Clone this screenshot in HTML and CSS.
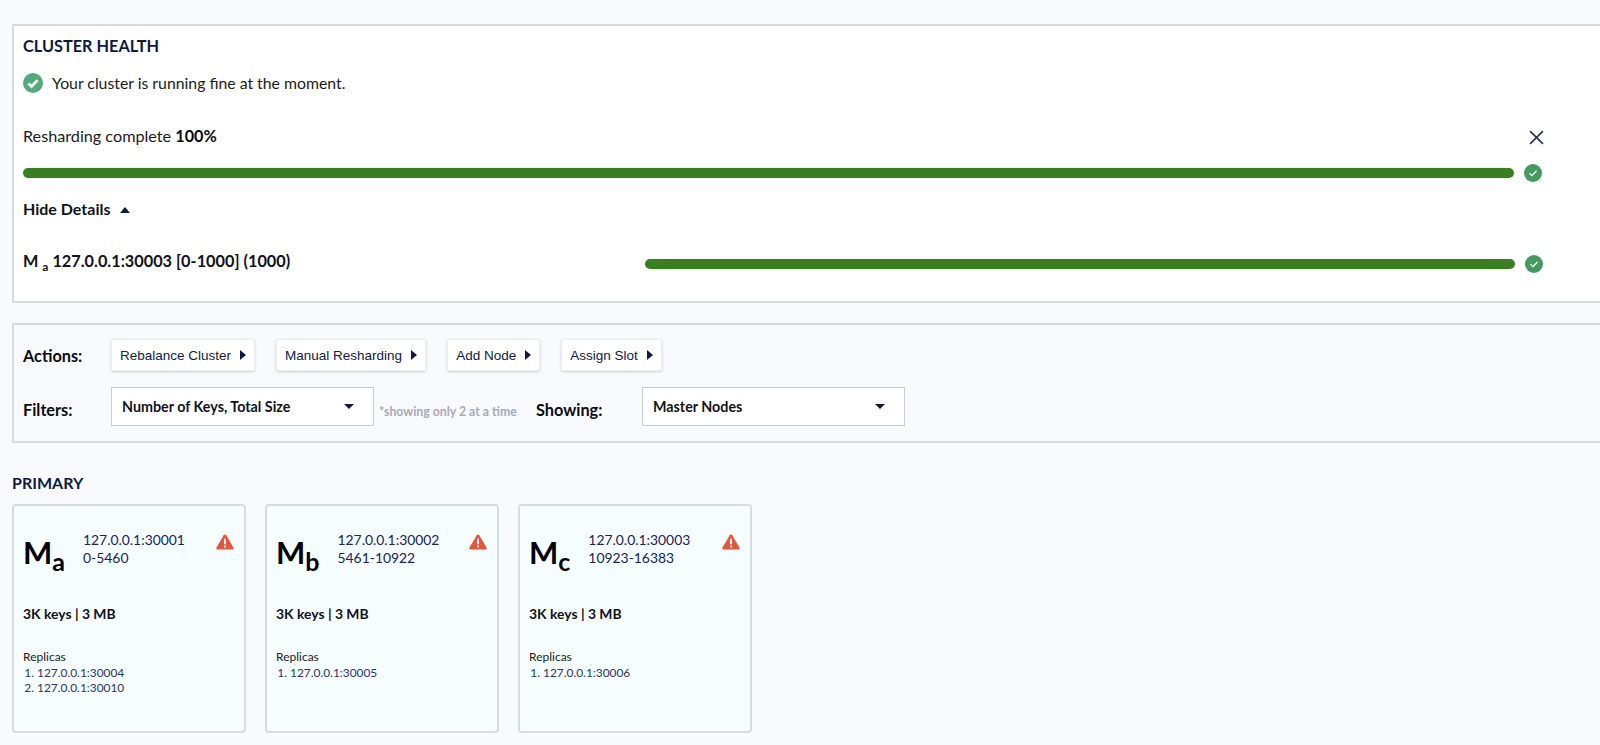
FILE: index.html
```html
<!DOCTYPE html>
<html lang="en">
<head>
<meta charset="utf-8">
<title>Cluster</title>
<link rel="stylesheet" href="styles.css">
</head>
<body>
<main class="page">
  <section class="panel health">
    <h2 class="title">CLUSTER HEALTH</h2>
    <div class="status">
      <svg class="status-icon" viewBox="0 0 20 20"><circle cx="10" cy="10" r="10" fill="#52ab78"/><path d="M5.4 10.4l3.2 3.1 6-6.4" fill="none" stroke="#fff" stroke-width="2.8"/></svg>
      <span>Your cluster is running fine at the moment.</span>
    </div>
    <div class="resharding">
      <span>Resharding complete <b>100%</b></span>
      <svg class="close" viewBox="0 0 14 14"><path d="M1 1l12 12M13 1L1 13" fill="none" stroke="#22305c" stroke-width="1.5"/></svg>
    </div>
    <div class="progress-row">
      <div class="bar"></div>
      <svg class="done" viewBox="0 0 18 18"><circle cx="9" cy="9" r="9" fill="#459b5f"/><path d="M5.4 9.3l2.5 2.4 4.6-4.7" fill="none" stroke="#fff" stroke-width="1.2"/></svg>
    </div>
    <div class="toggle">Hide Details <span class="caret-up"></span></div>
    <div class="detail-row">
      <div class="detail-label">M <sub>a</sub> 127.0.0.1:30003 [0-1000] (1000)</div>
      <div class="bar"></div>
      <svg class="done" viewBox="0 0 18 18"><circle cx="9" cy="9" r="9" fill="#459b5f"/><path d="M5.4 9.3l2.5 2.4 4.6-4.7" fill="none" stroke="#fff" stroke-width="1.2"/></svg>
    </div>
  </section>

  <section class="panel controls">
    <div class="control-row">
      <span class="label">Actions:</span>
      <button class="action">Rebalance Cluster <span class="caret-right"></span></button>
      <button class="action">Manual Resharding <span class="caret-right"></span></button>
      <button class="action">Add Node <span class="caret-right"></span></button>
      <button class="action">Assign Slot <span class="caret-right"></span></button>
    </div>
    <div class="filter-row">
      <span class="label">Filters:</span>
      <div class="select"><span>Number of Keys, Total Size</span><span class="caret-down"></span></div>
      <span class="hint">*showing only 2 at a time</span>
      <span class="label showing">Showing:</span>
      <div class="select"><span>Master Nodes</span><span class="caret-down"></span></div>
    </div>
  </section>

  <h2 class="section-title">PRIMARY</h2>
  <div class="cards">
    <article class="card">
      <div class="card-head">
        <div class="node">M<sub>a</sub></div>
        <div class="addr">127.0.0.1:30001<br>0-5460</div>
        <svg class="warn" viewBox="0 0 18 16"><path d="M9 0.5c.6 0 1 .3 1.3.8l7.3 12.4c.5.9-.1 1.8-1 1.8H1.4c-.9 0-1.5-.9-1-1.8L7.7 1.3C8 .8 8.4.5 9 .5z" fill="#e8563a"/><rect x="8" y="4.4" width="2" height="6" rx=".8" fill="#fff"/><circle cx="9" cy="12.6" r="1.1" fill="#fff"/></svg>
      </div>
      <div class="stats">3K keys | 3 MB</div>
      <div class="replicas">Replicas</div>
      <ol class="replica-list"><li>127.0.0.1:30004</li><li>127.0.0.1:30010</li></ol>
    </article>
    <article class="card">
      <div class="card-head">
        <div class="node">M<sub>b</sub></div>
        <div class="addr">127.0.0.1:30002<br>5461-10922</div>
        <svg class="warn" viewBox="0 0 18 16"><path d="M9 0.5c.6 0 1 .3 1.3.8l7.3 12.4c.5.9-.1 1.8-1 1.8H1.4c-.9 0-1.5-.9-1-1.8L7.7 1.3C8 .8 8.4.5 9 .5z" fill="#e8563a"/><rect x="8" y="4.4" width="2" height="6" rx=".8" fill="#fff"/><circle cx="9" cy="12.6" r="1.1" fill="#fff"/></svg>
      </div>
      <div class="stats">3K keys | 3 MB</div>
      <div class="replicas">Replicas</div>
      <ol class="replica-list"><li>127.0.0.1:30005</li></ol>
    </article>
    <article class="card">
      <div class="card-head">
        <div class="node">M<sub>c</sub></div>
        <div class="addr">127.0.0.1:30003<br>10923-16383</div>
        <svg class="warn" viewBox="0 0 18 16"><path d="M9 0.5c.6 0 1 .3 1.3.8l7.3 12.4c.5.9-.1 1.8-1 1.8H1.4c-.9 0-1.5-.9-1-1.8L7.7 1.3C8 .8 8.4.5 9 .5z" fill="#e8563a"/><rect x="8" y="4.4" width="2" height="6" rx=".8" fill="#fff"/><circle cx="9" cy="12.6" r="1.1" fill="#fff"/></svg>
      </div>
      <div class="stats">3K keys | 3 MB</div>
      <div class="replicas">Replicas</div>
      <ol class="replica-list"><li>127.0.0.1:30006</li></ol>
    </article>
  </div>
</main>
</body>
</html>
```
FILE: styles.css
```css
* { box-sizing: border-box; }
html, body { margin: 0; height: 745px; overflow: hidden; }
body { background: #f9fafe; font-family: Lato, "Open Sans", sans-serif; color: #0a0a12; }
.page { padding: 24px 0 0 12px; width: 1630px; }

.panel { border: 2px solid #d8dadf; margin: 0; }
.health { background: #fff; height: 279px; padding: 0 0 0 9px; }
.title { margin: 0; padding-top: 10px; font-size: 16.3px; line-height: 20px; font-weight: 700; color: #0f1a44; }
.status { display: flex; align-items: center; gap: 9px; margin-top: 17px; font-size: 15.8px; line-height: 20px; color: #1b1b22; }
.status-icon { width: 20px; height: 20px; flex: none; }
.resharding { display: flex; justify-content: space-between; align-items: center; width: 1521px; margin-top: 33px; font-size: 16.2px; line-height: 20px; color: #1b1b22; }
.resharding b { font-weight: 700; color: #0a0a12; }
.close { width: 15px; height: 15px; margin-top: 2px; }
.progress-row { display: flex; align-items: center; margin-top: 18px; width: 1519px; }
.bar { flex: 1; height: 10px; border-radius: 5px; background: #38801f; }
.done { width: 18px; height: 18px; flex: none; margin-left: 10px; }
.toggle { margin-top: 17px; display: flex; align-items: center; gap: 10px; font-size: 16px; font-weight: 700; line-height: 20px; color: #12121c; }
.caret-up { width: 0; height: 0; border: 5px solid transparent; border-top: 0; border-bottom: 6px solid #0f1a44; margin-top: 2px; }
.detail-row { display: flex; align-items: center; margin-top: 32px; width: 1520px; }
.detail-label { width: 622px; flex: none; font-size: 16.3px; font-weight: 700; line-height: 20px; color: #12121c; }
.detail-label sub { font-size: 12px; }

.controls { margin-top: 20px; height: 120px; padding: 14px 0 0 9px; }
.control-row { display: flex; align-items: center; }
.label { font-size: 16.3px; font-weight: 700; color: #0a0a12; width: 88px; flex: none; }
.filter-row .label { margin-top: 6px; }
.action { font: 13.5px "Liberation Sans", Arial, sans-serif; color: #101a45; height: 32px; padding: 0 8px; margin-right: 21px; background: #fff; border: 1px solid #eceef2; border-radius: 2px; box-shadow: 0 1px 3px rgba(0,0,0,.18); display: flex; align-items: center; gap: 9px; white-space: nowrap; }
.caret-right { width: 0; height: 0; border: 5px solid transparent; border-right: 0; border-left: 6px solid #0f1a44; }
.filter-row { display: flex; align-items: center; margin-top: 16px; height: 39px; }
.select { display: flex; align-items: center; justify-content: space-between; width: 263px; height: 39px; padding: 0 19px 0 10px; background: #fff; border: 1px solid #c9cbd0; font-size: 14.3px; font-weight: 700; color: #12121c; flex: none; }
.caret-down { width: 0; height: 0; border: 5px solid transparent; border-bottom: 0; border-top: 5px solid #0f1a44; }
.hint { font-size: 12.3px; font-weight: 700; color: #a6aab8; margin: 9px 0 0 5px; width: 157px; flex: none; white-space: nowrap; }
.filter-row .showing { width: 106px; }

.section-title { margin: 30px 0 0; font-size: 16px; line-height: 20px; font-weight: 700; color: #0f1a44; }
.cards { display: flex; gap: 19px; margin-top: 11px; }
.card { width: 234px; height: 229px; background: #f6fdff; border: 2px solid #d9dbe0; border-radius: 4px; padding: 0 9px; position: relative; }
.card-head { display: flex; align-items: flex-start; padding-top: 25px; gap: 18px; }
.node { flex: none; font-size: 31px; line-height: 42px; font-weight: 700; color: #000; }
.node sub { font-size: 25px; vertical-align: -7px; line-height: 0; }
.addr { font-size: 13.9px; line-height: 18px; color: #17235a; white-space: nowrap; }
.warn { position: absolute; right: 10px; top: 28px; width: 18px; height: 16px; }
.stats { margin-top: 32px; font-size: 13.9px; font-weight: 700; line-height: 18px; color: #12121c; }
.replicas { margin-top: 26px; font-size: 12px; line-height: 16px; color: #1b1b22; }
.replica-list { margin: 0; padding: 0 0 0 14px; font-size: 11.9px; line-height: 15px; color: #2a3566; }
```
